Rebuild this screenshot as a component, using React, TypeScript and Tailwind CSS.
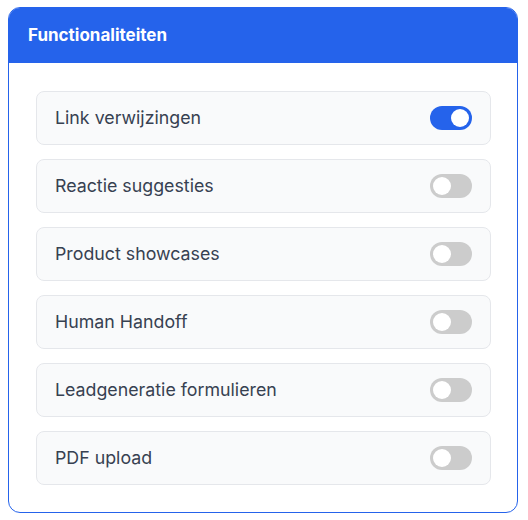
import React, { useState } from "react";

const items = [
  "Link verwijzingen",
  "Reactie suggesties",
  "Product showcases",
  "Human Handoff",
  "Leadgeneratie formulieren",
  "PDF upload",
];

function Toggle({ on, onClick }: { on: boolean; onClick: () => void }) {
  return (
    <button
      onClick={onClick}
      className={`relative w-[42px] h-[24px] rounded-full ${on ? "bg-[#2563eb]" : "bg-[#cccccc]"}`}
    >
      <span
        className={`absolute top-[3px] w-[18px] h-[18px] rounded-full bg-white ${on ? "left-[21px]" : "left-[3px]"}`}
      />
    </button>
  );
}

export default function App() {
  const [state, setState] = useState([true, false, false, false, false, false]);
  return (
    <div className="pt-[7px] pl-[8px]" style={{ fontFamily: "Inter, sans-serif" }}>
      <div className="w-[510px] h-[506px] border border-[#2563eb] rounded-[12px] overflow-hidden bg-white">
        <div className="h-[55px] bg-[#2563eb] flex items-center px-[19px]">
          <span className="text-white text-[17px] font-bold">Functionaliteiten</span>
        </div>
        <div className="flex flex-col gap-[14px] pt-[28px] pl-[27px] pr-[26px]">
          {items.map((t, i) => (
            <div
              key={t}
              className="h-[54px] flex items-center justify-between pl-[18px] pr-[18px] bg-[#f9fafb] border border-[#e5e7eb] rounded-[8px]"
            >
              <span className="text-[17.8px] text-[#374151]">{t}</span>
              <Toggle on={state[i]} onClick={() => setState(s => s.map((v, j) => (j === i ? !v : v)))} />
            </div>
          ))}
        </div>
      </div>
    </div>
  );
}
